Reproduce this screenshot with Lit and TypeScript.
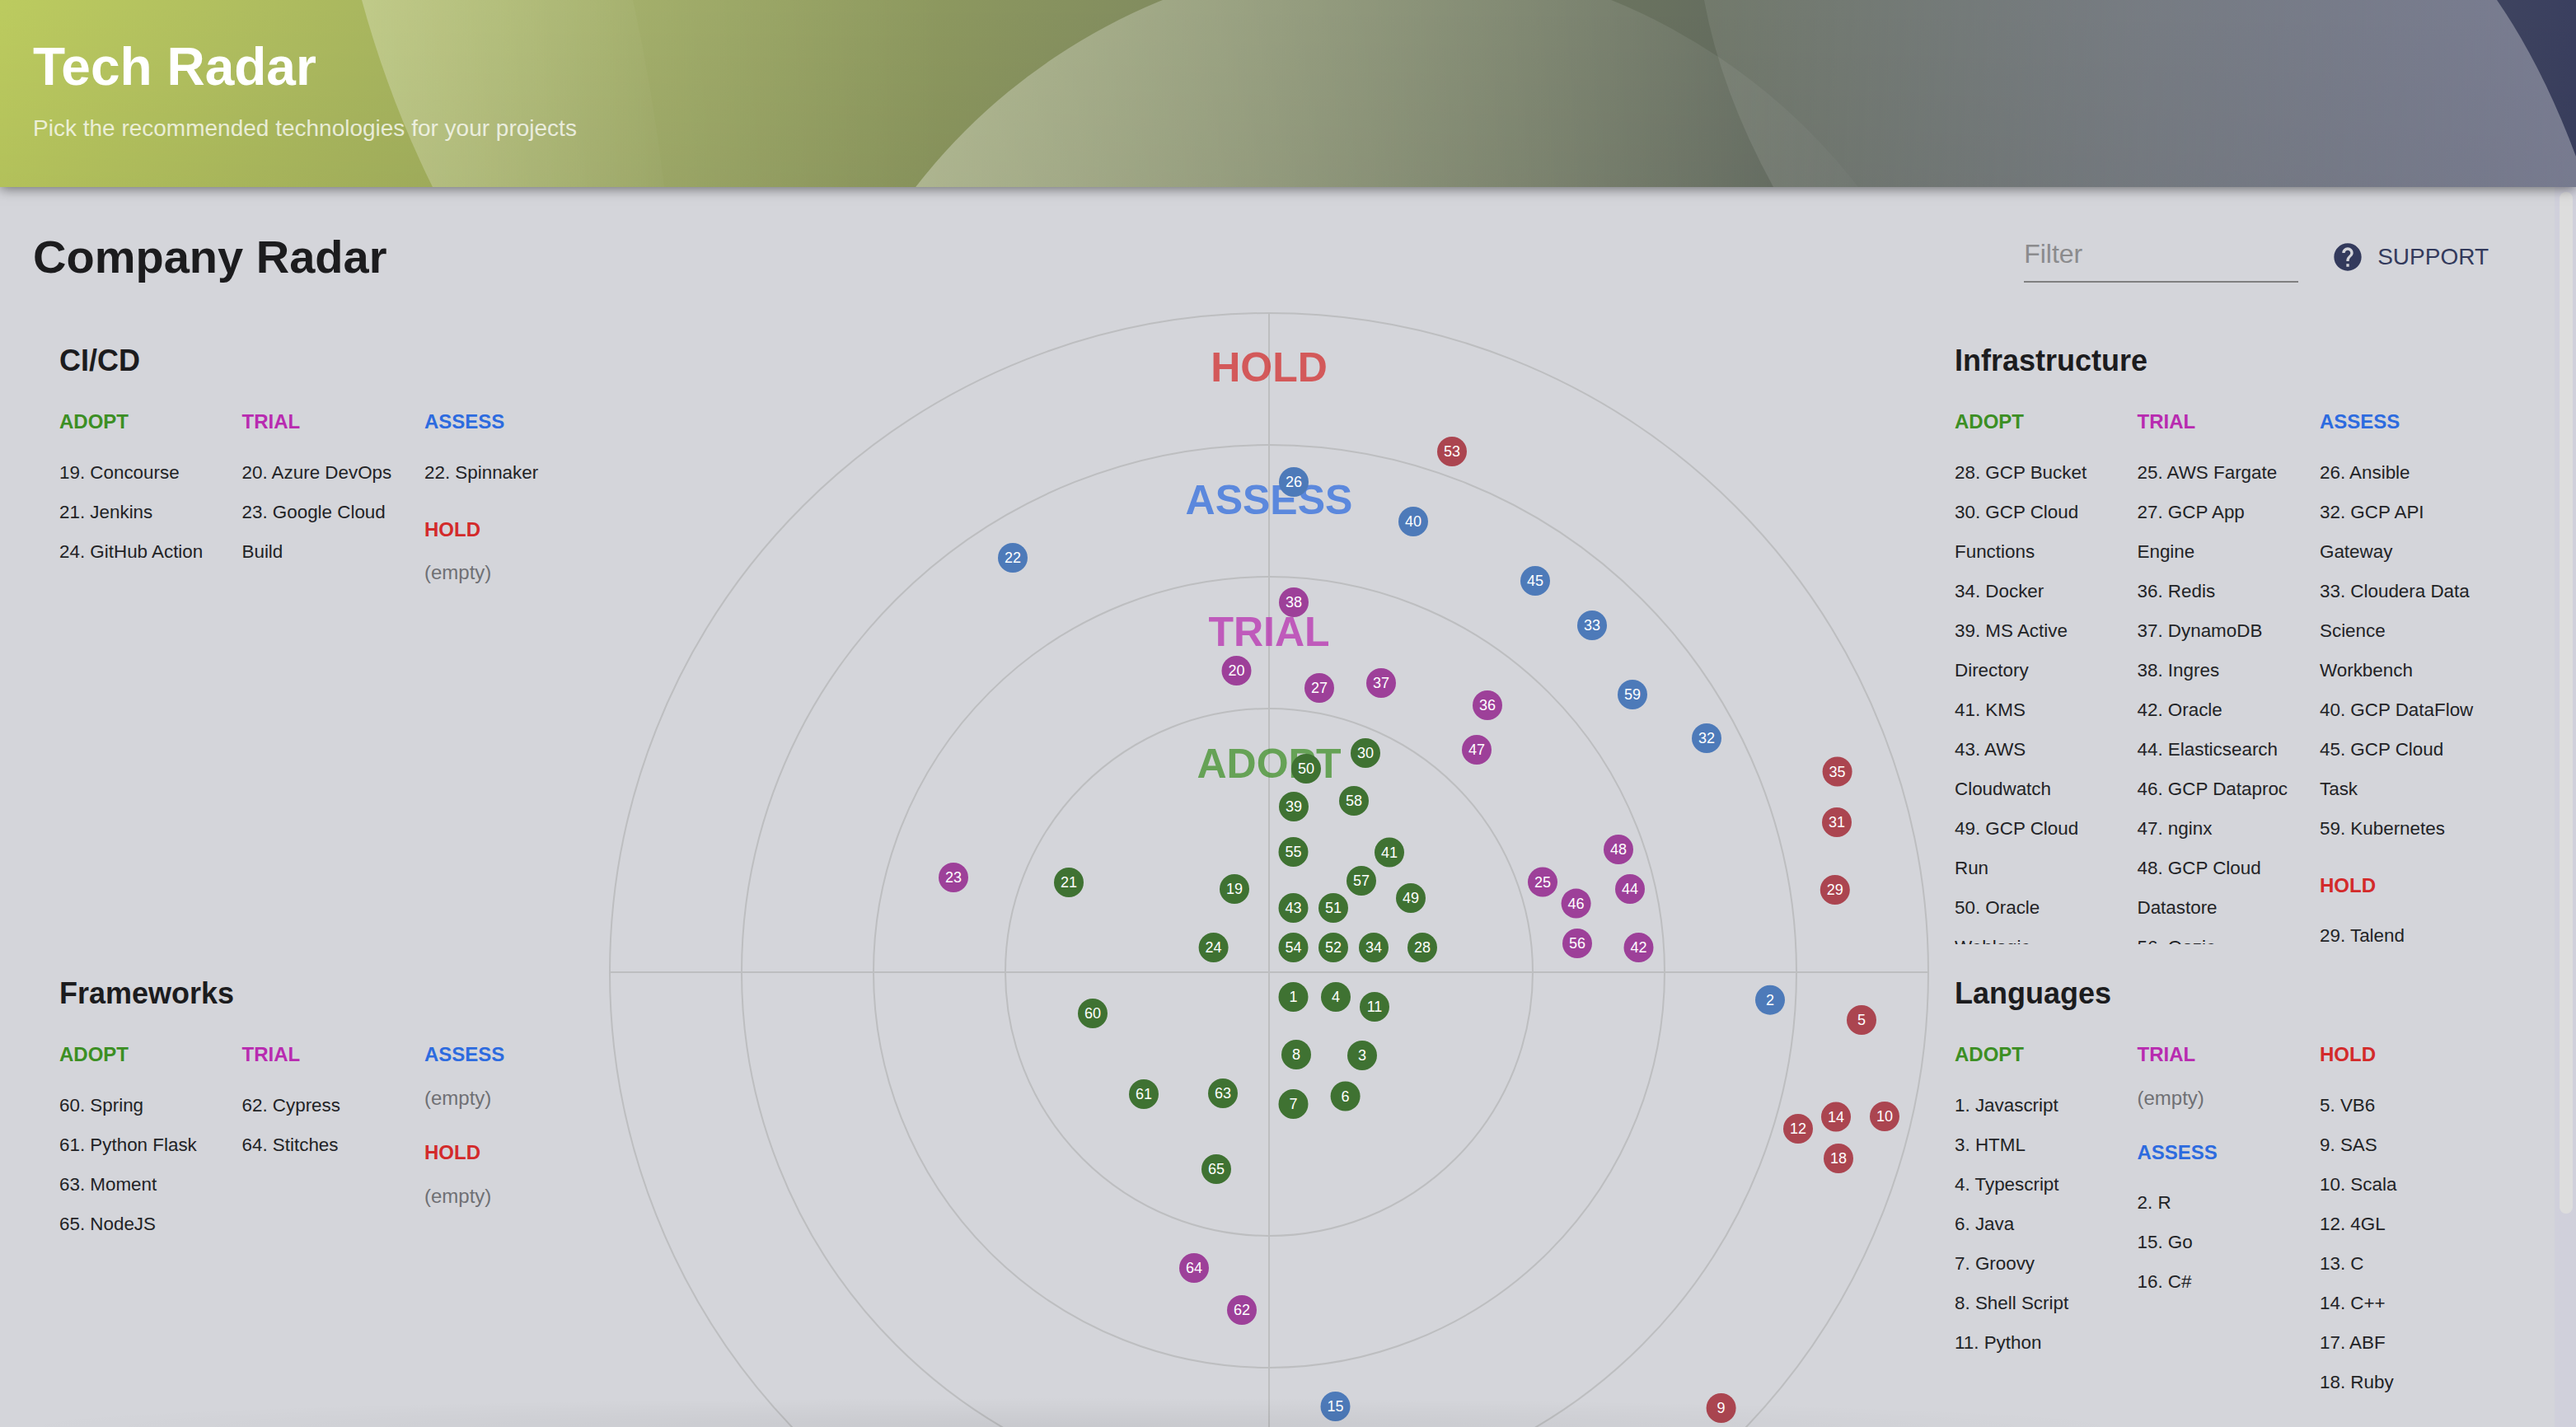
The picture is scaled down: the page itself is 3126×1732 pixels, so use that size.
import { LitElement, css, html, svg } from 'lit';
import { customElement } from 'lit/decorators.js';

type Ring = 'adopt' | 'trial' | 'assess' | 'hold';

interface Group {
  ring: Ring;
  items: string[];
}

interface Section {
  title: string;
  columns: Group[][];
}

const LABELS: Record<Ring, string> = { adopt: 'ADOPT', trial: 'TRIAL', assess: 'ASSESS', hold: 'HOLD' };

const CICD: Section = {
  title: 'CI/CD',
  columns: [
    [{ ring: 'adopt', items: ['19. Concourse', '21. Jenkins', '24. GitHub Action'] }],
    [{ ring: 'trial', items: ['20. Azure DevOps', '23. Google Cloud Build'] }],
    [{ ring: 'assess', items: ['22. Spinnaker'] }, { ring: 'hold', items: [] }],
  ],
};

const FRAMEWORKS: Section = {
  title: 'Frameworks',
  columns: [
    [{ ring: 'adopt', items: ['60. Spring', '61. Python Flask', '63. Moment', '65. NodeJS'] }],
    [{ ring: 'trial', items: ['62. Cypress', '64. Stitches'] }],
    [{ ring: 'assess', items: [] }, { ring: 'hold', items: [] }],
  ],
};

const INFRA: Section = {
  title: 'Infrastructure',
  columns: [
    [{ ring: 'adopt', items: ['28. GCP Bucket', '30. GCP Cloud Functions', '34. Docker', '39. MS Active Directory', '41. KMS', '43. AWS Cloudwatch', '49. GCP Cloud Run', '50. Oracle Weblogic'] }],
    [{ ring: 'trial', items: ['25. AWS Fargate', '27. GCP App Engine', '36. Redis', '37. DynamoDB', '38. Ingres', '42. Oracle', '44. Elasticsearch', '46. GCP Dataproc', '47. nginx', '48. GCP Cloud Datastore', '56. Oozie'] }],
    [
      { ring: 'assess', items: ['26. Ansible', '32. GCP API Gateway', '33. Cloudera Data Science Workbench', '40. GCP DataFlow', '45. GCP Cloud Task', '59. Kubernetes'] },
      { ring: 'hold', items: ['29. Talend'] },
    ],
  ],
};

const LANGUAGES: Section = {
  title: 'Languages',
  columns: [
    [{ ring: 'adopt', items: ['1. Javascript', '3. HTML', '4. Typescript', '6. Java', '7. Groovy', '8. Shell Script', '11. Python'] }],
    [{ ring: 'trial', items: [] }, { ring: 'assess', items: ['2. R', '15. Go', '16. C#'] }],
    [{ ring: 'hold', items: ['5. VB6', '9. SAS', '10. Scala', '12. 4GL', '13. C', '14. C++', '17. ABF', '18. Ruby'] }],
  ],
};

// [label, x, y] in radar coordinates, centre of the radar is 800,800
const DOTS: Record<Ring, [number, number, number][]> = {
  adopt: [
    [1, 829.5, 830], [3, 913, 901], [4, 881, 830], [6, 892.6, 950.5], [7, 829.5, 960], [8, 833, 900], [11, 928, 842],
    [19, 758, 699], [21, 557, 691], [24, 732.6, 770], [28, 986, 770], [30, 917, 534], [34, 927, 770], [39, 830, 599],
    [41, 946, 654.5], [43, 829.5, 722], [49, 972, 710], [50, 845, 553], [51, 878, 722], [52, 878, 770], [54, 829.5, 770],
    [55, 829.5, 654], [57, 912, 689], [58, 903, 592], [60, 586, 850], [61, 648, 948], [63, 744, 947], [65, 736, 1039],
  ],
  trial: [
    [20, 760.5, 434], [23, 417, 685], [25, 1132, 690.5], [27, 861, 455], [36, 1065, 476], [37, 936, 449], [38, 830, 351],
    [42, 1248.5, 770], [44, 1238, 699], [46, 1172.6, 716.6], [47, 1052, 530], [48, 1224, 651], [56, 1174, 765], [62, 767, 1210], [64, 709, 1159],
  ],
  assess: [
    [2, 1408, 833.7], [15, 880.5, 1327], [22, 489, 297], [26, 830, 205], [32, 1331, 516], [33, 1192, 379], [40, 975, 253], [45, 1123, 325], [59, 1241, 463],
  ],
  hold: [
    [5, 1519, 858], [9, 1348.6, 1329], [10, 1547, 975], [12, 1442, 990], [14, 1488, 975.5], [18, 1491, 1026], [29, 1486.8, 700], [31, 1489, 618], [35, 1489.6, 556.5], [53, 1022, 168],
  ],
};

const BANDS: [Ring, number][] = [['hold', 83], ['assess', 244], ['trial', 404], ['adopt', 564]];

@customElement('tech-radar')
export class TechRadar extends LitElement {
  static styles = css`
    :host {
      display: block;
      width: 1600px;
      height: 1600px;
    }
    svg {
      display: block;
      overflow: visible;
      font-family: 'Liberation Sans', Arial, sans-serif;
    }
    .grid {
      fill: none;
      stroke: #bdbec0;
      stroke-width: 2;
    }
    .band {
      font-size: 50px;
      font-weight: 700;
      text-anchor: middle;
      opacity: 0.72;
    }
    .band.adopt { fill: #3c8f24; }
    .band.trial { fill: #b82bb0; }
    .band.assess { fill: #2d6bdf; }
    .band.hold { fill: #d32a2a; }
    .dot.adopt { fill: #3f7232; }
    .dot.trial { fill: #9d4099; }
    .dot.assess { fill: #4d7ab9; }
    .dot.hold { fill: #ab4550; }
    .num {
      fill: #fff;
      font-size: 18px;
      text-anchor: middle;
      dominant-baseline: central;
    }
  `;

  render() {
    const rings = Object.keys(DOTS) as Ring[];
    return html`
      <svg width="1600" height="1600" viewBox="0 0 1600 1600">
        ${[320, 480, 640, 800].map((r) => svg`<circle class="grid" cx="800" cy="800" r=${r}></circle>`)}
        <line class="grid" x1="800" y1="0" x2="800" y2="1600"></line>
        <line class="grid" x1="0" y1="800" x2="1600" y2="800"></line>
        ${BANDS.map(([ring, y]) => svg`<text class="band ${ring}" x="800" y=${y}>${LABELS[ring]}</text>`)}
        ${rings.map((ring) =>
          DOTS[ring].map(
            ([n, x, y]) => svg`
              <circle class="dot ${ring}" cx=${x} cy=${y} r="18"></circle>
              <text class="num" x=${x} y=${y}>${n}</text>
            `,
          ),
        )}
      </svg>
    `;
  }
}

@customElement('radar-section')
export class RadarSection extends LitElement {
  static properties = { section: { attribute: false } };
  section!: Section;

  static styles = css`
    :host {
      display: block;
      height: 768px;
    }
    h2 {
      margin: 0 0 31px;
      font-size: 36px;
      line-height: 54px;
      font-weight: 700;
      color: #1c1c1e;
    }
    .cols {
      display: grid;
      grid-template-columns: repeat(3, 190px);
      column-gap: 31.5px;
      height: 650px;
      overflow: hidden;
    }
    .group + .group {
      margin-top: 29px;
    }
    h3 {
      margin: 0 0 21.5px;
      font-size: 24px;
      line-height: 32px;
      font-weight: 700;
    }
    .group + .group h3 {
      margin-bottom: 21px;
    }
    h3.adopt { color: #3c8f24; }
    h3.trial { color: #b82bb0; }
    h3.assess { color: #2d6bdf; }
    h3.hold { color: #d32a2a; }
    ul {
      margin: 0;
      padding: 0;
      list-style: none;
      font-size: 22.4px;
      line-height: 48px;
      color: #222326;
    }
    .empty {
      margin-top: -2.5px;
      padding-bottom: 3px;
      font-size: 24px;
      line-height: 36px;
      color: #6f7074;
    }
  `;

  render() {
    return html`
      <h2>${this.section.title}</h2>
      <div class="cols">
        ${this.section.columns.map(
          (col) => html`
            <div>
              ${col.map(
                (g) => html`
                  <div class="group">
                    <h3 class=${g.ring}>${LABELS[g.ring]}</h3>
                    ${g.items.length
                      ? html`<ul>${g.items.map((t) => html`<li>${t}</li>`)}</ul>`
                      : html`<div class="empty">(empty)</div>`}
                  </div>
                `,
              )}
            </div>
          `,
        )}
      </div>
    `;
  }
}

@customElement('app-root')
export class AppRoot extends LitElement {
  static styles = css`
    :host {
      display: block;
      position: relative;
      height: 100vh;
      overflow: hidden;
      background: #d4d5da;
      font-family: 'Liberation Sans', Arial, sans-serif;
    }
    .hero {
      position: relative;
      height: 227px;
      box-sizing: border-box;
      padding: 41px 40px 0;
      overflow: hidden;
      background: linear-gradient(180deg, rgba(0, 0, 0, 0), rgba(0, 0, 0, 0.05)), linear-gradient(90deg, #bccb5f, #3a3f5f);
    }
    .hero-shadow {
      position: relative;
      z-index: 2;
      box-shadow: 0 2px 14px rgba(0, 0, 0, 0.5);
    }
    .art {
      position: absolute;
      inset: 0;
    }
    .hero h1 {
      position: relative;
      margin: 0;
      font-size: 64px;
      line-height: 80px;
      font-weight: 700;
      color: #fff;
    }
    .hero p {
      position: relative;
      margin: 17px 0 0;
      font-size: 28px;
      line-height: 36px;
      color: rgba(255, 255, 255, 0.75);
    }
    .toolbar {
      display: flex;
      align-items: flex-start;
      height: 153px;
      box-sizing: border-box;
      padding: 50px 0 0 40px;
    }
    .toolbar h1 {
      flex: 1;
      margin: 0;
      font-size: 56px;
      line-height: 70px;
      font-weight: 700;
      color: #1c1c1e;
    }
    .filter {
      width: 333px;
      height: 66px;
      box-sizing: border-box;
      border-bottom: 2px solid #808080;
      font-size: 32px;
      line-height: 62px;
      color: #8b8b8d;
    }
    .support {
      display: flex;
      align-items: center;
      gap: 16px;
      margin: 15px 106px 0 40px;
      font-size: 28px;
      line-height: 40px;
      color: #333a5c;
    }
    .support svg {
      display: block;
      fill: currentColor;
    }
    .body {
      display: flex;
    }
    .panel {
      box-sizing: border-box;
      padding-top: 31px;
    }
    .panel.left {
      width: 740px;
      padding-left: 72px;
    }
    .panel.right {
      padding-left: 32px;
    }
    .scrollbar {
      position: absolute;
      z-index: 1;
      top: 227px;
      right: 0;
      bottom: 0;
      width: 26px;
      background: #d0d0db;
    }
    .thumb {
      position: absolute;
      top: 6px;
      left: 6px;
      width: 16px;
      height: 1240px;
      border-radius: 8px;
      background: #dddddd;
    }
    .fade {
      position: absolute;
      left: 0;
      bottom: 0;
      width: 2700px;
      height: 36px;
      background: radial-gradient(ellipse 1300px 36px at 1300px 100%, rgba(0, 0, 0, 0.06), rgba(0, 0, 0, 0));
    }
  `;

  render() {
    return html`
      <div class="hero-shadow">
        <header class="hero">
          <svg class="art" width="3126" height="227" viewBox="0 0 3126 227">
            <defs>
              <linearGradient id="fa" x1="439" x2="806" y1="0" y2="0" gradientUnits="userSpaceOnUse">
                <stop offset="0" stop-color="#fff" stop-opacity="0.14"></stop>
                <stop offset="1" stop-color="#fff" stop-opacity="0.02"></stop>
              </linearGradient>
              <linearGradient id="fb" x1="439" x2="1150" y1="0" y2="0" gradientUnits="userSpaceOnUse">
                <stop offset="0" stop-color="#fff" stop-opacity="0.14"></stop>
                <stop offset="1" stop-color="#fff" stop-opacity="0"></stop>
              </linearGradient>
              <linearGradient id="fc" x1="1111" x2="2255" y1="0" y2="0" gradientUnits="userSpaceOnUse">
                <stop offset="0" stop-color="#fff" stop-opacity="0.32"></stop>
                <stop offset="1" stop-color="#fff" stop-opacity="0.02"></stop>
              </linearGradient>
              <linearGradient id="fd" x1="2068" x2="3126" y1="0" y2="0" gradientUnits="userSpaceOnUse">
                <stop offset="0" stop-color="#fff" stop-opacity="0.08"></stop>
                <stop offset="0.5" stop-color="#fff" stop-opacity="0.22"></stop>
                <stop offset="1" stop-color="#fff" stop-opacity="0.32"></stop>
              </linearGradient>
            </defs>
            <path d="M439 0Q472 120 525 227L806 227Q792 110 768 0Z" fill="url(#fa)"></path>
            <path d="M439 0Q472 120 525 227L1150 227L1150 0Z" fill="url(#fb)"></path>
            <circle cx="1683" cy="671" r="724" fill="url(#fc)"></circle>
            <path d="M2068 0Q2088 110 2152 227L3126 227L3126 190Q3085 80 3030 0Z" fill="url(#fd)"></path>
          </svg>
          <h1>Tech Radar</h1>
          <p>Pick the recommended technologies for your projects</p>
        </header>
      </div>
      <div class="toolbar">
        <h1>Company Radar</h1>
        <div class="filter">Filter</div>
        <div class="support">
          <svg width="40" height="40" viewBox="0 0 24 24">
            <path d="M12 2C6.48 2 2 6.48 2 12s4.48 10 10 10 10-4.48 10-10S17.52 2 12 2zm1 17h-2v-2h2v2zm2.07-7.75l-.9.92C13.45 12.9 13 13.5 13 15h-2v-.5c0-1.1.45-2.1 1.17-2.83l1.24-1.26c.37-.36.59-.86.59-1.41 0-1.1-.9-2-2-2s-2 .9-2 2H8c0-2.21 1.79-4 4-4s4 1.79 4 4c0 .88-.36 1.68-.93 2.25z"></path>
          </svg>
          SUPPORT
        </div>
      </div>
      <div class="body">
        <div class="panel left">
          <radar-section .section=${CICD}></radar-section>
          <radar-section .section=${FRAMEWORKS}></radar-section>
        </div>
        <tech-radar></tech-radar>
        <div class="panel right">
          <radar-section .section=${INFRA}></radar-section>
          <radar-section .section=${LANGUAGES}></radar-section>
        </div>
      </div>
      <div class="fade"></div>
      <div class="scrollbar"><div class="thumb"></div></div>
    `;
  }
}
